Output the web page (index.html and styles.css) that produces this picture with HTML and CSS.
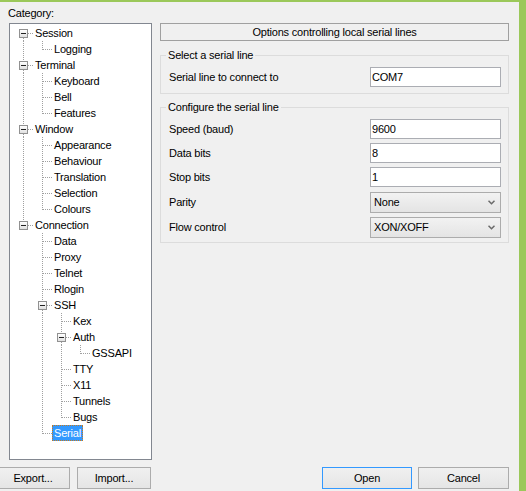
FILE: index.html
```html
<!DOCTYPE html>
<html>
<head>
<meta charset="utf-8">
<title>PuTTY Configuration</title>
<link rel="stylesheet" href="styles.css">
</head>
<body>
<div class="window">
  <div class="main">
    <div class="left">
      <div class="cat-label">Category:</div>
      <div class="tree">
        <div class="row"><span class="c bx bx-d"><span class="exp"></span></span><span class="lbl">Session</span></div>
        <div class="row"><span class="c pipe"></span><span class="c elbow"></span><span class="lbl">Logging</span></div>
        <div class="row"><span class="c bx bx-ud"><span class="exp"></span></span><span class="lbl">Terminal</span></div>
        <div class="row"><span class="c pipe"></span><span class="c tee"></span><span class="lbl">Keyboard</span></div>
        <div class="row"><span class="c pipe"></span><span class="c tee"></span><span class="lbl">Bell</span></div>
        <div class="row"><span class="c pipe"></span><span class="c elbow"></span><span class="lbl">Features</span></div>
        <div class="row"><span class="c bx bx-ud"><span class="exp"></span></span><span class="lbl">Window</span></div>
        <div class="row"><span class="c pipe"></span><span class="c tee"></span><span class="lbl">Appearance</span></div>
        <div class="row"><span class="c pipe"></span><span class="c tee"></span><span class="lbl">Behaviour</span></div>
        <div class="row"><span class="c pipe"></span><span class="c tee"></span><span class="lbl">Translation</span></div>
        <div class="row"><span class="c pipe"></span><span class="c tee"></span><span class="lbl">Selection</span></div>
        <div class="row"><span class="c pipe"></span><span class="c elbow"></span><span class="lbl">Colours</span></div>
        <div class="row"><span class="c bx bx-u"><span class="exp"></span></span><span class="lbl">Connection</span></div>
        <div class="row"><span class="c"></span><span class="c tee"></span><span class="lbl">Data</span></div>
        <div class="row"><span class="c"></span><span class="c tee"></span><span class="lbl">Proxy</span></div>
        <div class="row"><span class="c"></span><span class="c tee"></span><span class="lbl">Telnet</span></div>
        <div class="row"><span class="c"></span><span class="c tee"></span><span class="lbl">Rlogin</span></div>
        <div class="row"><span class="c"></span><span class="c bx bx-ud"><span class="exp"></span></span><span class="lbl">SSH</span></div>
        <div class="row"><span class="c"></span><span class="c pipe"></span><span class="c tee"></span><span class="lbl">Kex</span></div>
        <div class="row"><span class="c"></span><span class="c pipe"></span><span class="c bx bx-ud"><span class="exp"></span></span><span class="lbl">Auth</span></div>
        <div class="row"><span class="c"></span><span class="c pipe"></span><span class="c pipe"></span><span class="c elbow"></span><span class="lbl">GSSAPI</span></div>
        <div class="row"><span class="c"></span><span class="c pipe"></span><span class="c tee"></span><span class="lbl">TTY</span></div>
        <div class="row"><span class="c"></span><span class="c pipe"></span><span class="c tee"></span><span class="lbl">X11</span></div>
        <div class="row"><span class="c"></span><span class="c pipe"></span><span class="c tee"></span><span class="lbl">Tunnels</span></div>
        <div class="row"><span class="c"></span><span class="c pipe"></span><span class="c elbow"></span><span class="lbl">Bugs</span></div>
        <div class="row"><span class="c"></span><span class="c elbow"></span><span class="lbl sel">Serial</span></div>
      </div>
    </div>
    <div class="right">
      <div class="hdr">Options controlling local serial lines</div>
      <fieldset class="group g1">
        <legend>Select a serial line</legend>
        <div class="frow h20"><span class="flabel">Serial line to connect to</span><div class="tf">COM7</div></div>
      </fieldset>
      <fieldset class="group g2">
        <legend>Configure the serial line</legend>
        <div class="frow h24"><span class="flabel">Speed (baud)</span><div class="tf">9600</div></div>
        <div class="frow h24"><span class="flabel">Data bits</span><div class="tf">8</div></div>
        <div class="frow h25"><span class="flabel">Stop bits</span><div class="tf">1</div></div>
        <div class="frow h25"><span class="flabel">Parity</span><div class="combo"><span>None</span><svg class="chev" width="7" height="5" viewBox="0 0 7 5"><polyline points="0.5,0.8 3.5,3.8 6.5,0.8" fill="none" stroke="#6a6a6a" stroke-width="1.5"/></svg></div></div>
        <div class="frow h21"><span class="flabel">Flow control</span><div class="combo"><span>XON/XOFF</span><svg class="chev" width="7" height="5" viewBox="0 0 7 5"><polyline points="0.5,0.8 3.5,3.8 6.5,0.8" fill="none" stroke="#6a6a6a" stroke-width="1.5"/></svg></div></div>
      </fieldset>
    </div>
  </div>
  <div class="bottom">
    <button class="btn export">Export...</button>
    <button class="btn import">Import...</button>
    <button class="btn open">Open</button>
    <button class="btn cancel">Cancel</button>
  </div>
</div>
</body>
</html>
```

FILE: styles.css
```css
html, body {
  margin: 0;
  padding: 0;
  background: #f0f0f0;
}
body {
  font-family: "Liberation Sans", Arial, sans-serif;
  font-size: 11px;
  letter-spacing: -0.2px;
  color: #000;
  overflow: hidden;
}
:root {
  --dv: repeating-linear-gradient(to bottom, #a0a0a0 0 1px, transparent 1px 2px);
  --dh: repeating-linear-gradient(to right, #a0a0a0 0 1px, transparent 1px 2px);
}
.window {
  width: 526px;
  height: 491px;
  box-sizing: border-box;
  border-top: 2px solid #9bc85a;
  border-right: 7px solid #9bc85a;
  background: #f0f0f0;
  display: flex;
  flex-direction: column;
  overflow: hidden;
}
.main {
  flex: 1;
  display: flex;
  min-height: 0;
}
.left {
  width: 160px;
  flex: none;
}
.cat-label {
  margin-top: 5px;
  padding-left: 8px;
  line-height: 13px;
  height: 13px;
}
.tree {
  margin: 3px 0 0 9px;
  width: 143px;
  height: 437px;
  box-sizing: border-box;
  border: 1px solid #828790;
  background: #fff;
  padding: 1px 0 0 4px;
}
.row {
  display: flex;
  height: 16px;
  line-height: 16px;
  white-space: nowrap;
}
.c {
  flex: none;
  display: block;
  width: 19px;
  height: 16px;
  box-sizing: border-box;
}
.pipe {
  background: var(--dv) 9px 0 / 1px 16px no-repeat;
}
.tee {
  background: var(--dh) 10px 8px / 9px 1px no-repeat, var(--dv) 9px 0 / 1px 16px no-repeat;
}
.elbow {
  background: var(--dh) 10px 8px / 9px 1px no-repeat, var(--dv) 9px 0 / 1px 9px no-repeat;
}
.bx {
  padding: 4px 0 0 5px;
}
.bx-d {
  background: var(--dh) 14px 8px / 5px 1px no-repeat, var(--dv) 9px 13px / 1px 3px no-repeat;
}
.bx-u {
  background: var(--dh) 14px 8px / 5px 1px no-repeat, var(--dv) 9px 0 / 1px 4px no-repeat;
}
.bx-ud {
  background: var(--dh) 14px 8px / 5px 1px no-repeat, var(--dv) 9px 0 / 1px 4px no-repeat, var(--dv) 9px 13px / 1px 3px no-repeat;
}
.exp {
  display: block;
  width: 9px;
  height: 9px;
  box-sizing: border-box;
  border: 1px solid #919191;
  background: linear-gradient(#222, #222) center / 5px 1px no-repeat, linear-gradient(#ffffff, #e0e0e0);
}
.lbl {
  padding: 0 2px;
  height: 16px;
}
.lbl.sel {
  background: #3399ff;
  color: #fff;
  padding: 0 1px;
  border: 1px dotted #c67a1e;
  line-height: 14px;
  box-sizing: border-box;
}
.right {
  width: 349px;
  flex: none;
  padding-top: 21px;
}
.hdr {
  height: 18px;
  box-sizing: border-box;
  border: 1px solid #a0a0a0;
  text-align: center;
  line-height: 16px;
}
.group {
  margin: 0;
  border: 1px solid #dcdcdc;
  padding: 5px 7px 0 8px;
  min-width: 0;
}
.group legend {
  padding: 0 2px;
  margin-left: -3px;
  line-height: 13px;
  height: 13px;
}
.g1 {
  margin-top: 8px;
  padding-bottom: 6px;
}
.g2 {
  margin-top: 7px;
  padding-bottom: 4px;
}
.frow {
  display: flex;
  align-items: flex-start;
}
.h20 { height: 20px; }
.h21 { height: 21px; }
.h24 { height: 24px; }
.h25 { height: 25px; }
.flabel {
  flex: 1;
  line-height: 20px;
}
.tf {
  width: 131px;
  height: 20px;
  box-sizing: border-box;
  border: 1px solid #abadb3;
  background: #fff;
  padding-left: 1px;
  line-height: 18px;
}
.combo {
  width: 131px;
  height: 21px;
  box-sizing: border-box;
  border: 1px solid #acacac;
  background: linear-gradient(#f2f2f2, #e4e4e4);
  display: flex;
  align-items: center;
  justify-content: space-between;
  padding: 0 5px 0 3px;
  line-height: 19px;
}
.chev {
  display: block;
}
.bottom {
  height: 22px;
  margin-bottom: 2px;
  display: flex;
  padding-right: 10px;
}
.btn {
  font-family: "Liberation Sans", Arial, sans-serif;
  font-size: 11px;
  letter-spacing: -0.2px;
  color: #000;
  height: 22px;
  box-sizing: border-box;
  border: 1px solid #acacac;
  background: linear-gradient(#f0f0f0, #e5e5e5);
  padding: 0;
  margin: 0;
  line-height: 20px;
}
.export {
  width: 74px;
  margin-left: -4px;
}
.import {
  width: 74px;
  margin-left: 7px;
}
.open {
  width: 90px;
  margin-left: auto;
  border-color: #3399ff;
}
.cancel {
  width: 91px;
  margin-left: 6px;
}
```
